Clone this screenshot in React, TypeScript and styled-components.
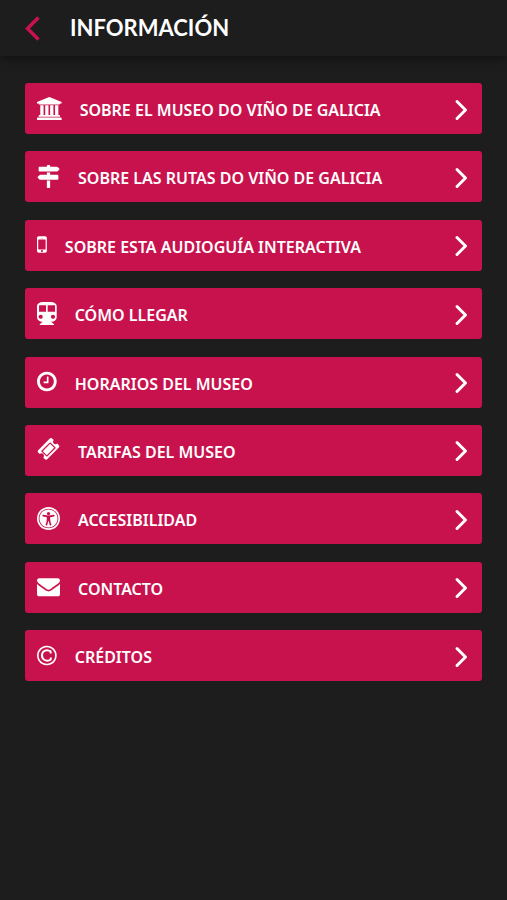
import React from 'react';
import styled, { createGlobalStyle } from 'styled-components';

const GlobalStyle = createGlobalStyle`
  *, *::before, *::after { box-sizing: border-box; }
  body {
    margin: 0;
    background: #1d1d1d;
    font-family: 'Noto Sans', 'Open Sans', sans-serif;
  }
`;

const Page = styled.div`
  min-height: 100vh;
  background: #1d1d1d;
  color: #fff;
`;

const Header = styled.header`
  display: flex;
  align-items: center;
  gap: 28px;
  height: 56px;
  padding: 0 24px;
  box-shadow: 0 2px 10px rgba(0, 0, 0, 0.5);
`;

const BackButton = styled.button`
  display: flex;
  padding: 0;
  border: 0;
  background: none;
  color: #c8124d;
  cursor: pointer;
`;

const Title = styled.h1`
  margin: 0;
  font-family: Optima, Lato, sans-serif;
  font-size: 22px;
  font-weight: 700;
  line-height: 28px;
`;

const Menu = styled.ul`
  display: grid;
  align-content: space-between;
  gap: 17px;
  min-height: 598px;
  margin: 27px 25px;
  padding: 0;
  list-style: none;
`;

const MenuLink = styled.a`
  display: flex;
  align-items: center;
  gap: 18px;
  min-height: 51px;
  padding: 0 14px 0 12px;
  border-radius: 3px;
  background: #c8124d;
  color: #fff;
  text-decoration: none;
`;

const Glyph = styled.svg`
  flex: none;
  height: 23px;
  margin-bottom: 1px;
  fill: currentColor;
`;

const Label = styled.span`
  flex: 1;
  padding-top: 3px;
  font-size: 16px;
  font-weight: 600;
  line-height: 24px;
`;

type Icon = { width: number; path: string };

const icons: Record<string, Icon> = {
  museum: {
    width: 1920,
    path: 'M960 1536l960 -384v-128h-128q0 -26 -20.5 -45t-48.5 -19h-1526q-28 0 -48.5 19t-20.5 45h-128v128zM256 896h256v-768h128v768h256v-768h128v768h256v-768h128v768h256v-768h59q28 0 48.5 -19t20.5 -45v-64h-1664v64q0 26 20.5 45t48.5 19h59v768zM1851 -64q28 0 48.5 -19t20.5 -45v-128h-1920v128q0 26 20.5 45t48.5 19h1782z',
  },
  signs: {
    width: 1792,
    path: 'M1745 1239q10 -10 10 -23t-10 -23l-141 -141q-28 -28 -68 -28h-1344q-26 0 -45 19t-19 45v256q0 26 19 45t45 19h576v64q0 26 19 45t45 19h128q26 0 45 -19t19 -45v-64h512q40 0 68 -28zM768 320h256v-512q0 -26 -19 -45t-45 -19h-128q-26 0 -45 19t-19 45v512zM1600 768q26 0 45 -19t19 -45v-256q0 -26 -19 -45t-45 -19h-1344q-40 0 -68 28l-141 141q-10 10 -10 23t10 23l141 141q28 28 68 28h512v192h256v-192h576z',
  },
  mobile: {
    width: 768,
    path: 'M464 128q0 33 -23.5 56.5t-56.5 23.5t-56.5 -23.5t-23.5 -56.5t23.5 -56.5t56.5 -23.5t56.5 23.5t23.5 56.5zM672 288v704q0 13 -9.5 22.5t-22.5 9.5h-512q-13 0 -22.5 -9.5t-9.5 -22.5v-704q0 -13 9.5 -22.5t22.5 -9.5h512q13 0 22.5 9.5t9.5 22.5zM480 1136q0 16 -16 16h-160q-16 0 -16 -16t16 -16h160q16 0 16 16zM768 1152v-1024q0 -52 -38 -90t-90 -38h-512q-52 0 -90 38t-38 90v1024q0 52 38 90t90 38h512q52 0 90 -38t38 -90z',
  },
  subway: {
    width: 1536,
    path: 'M1088 1536q185 0 316.5 -93.5t131.5 -226.5v-896q0 -130 -125.5 -222t-305.5 -97l213 -202q16 -15 8 -35t-30 -20h-1056q-22 0 -30 20t8 35l213 202q-180 5 -305.5 97t-125.5 222v896q0 133 131.5 226.5t316.5 93.5h640zM288 224q66 0 113 47t47 113t-47 113t-113 47t-113 -47t-47 -113t47 -113t113 -47zM704 768v512h-544v-512h544zM1248 224q66 0 113 47t47 113t-47 113t-113 47t-113 -47t-47 -113t47 -113t113 -47zM1408 768v512h-576v-512h576z',
  },
  clock: {
    width: 1536,
    path: 'M896 992v-448q0 -14 -9 -23t-23 -9h-320q-14 0 -23 9t-9 23v64q0 14 9 23t23 9h224v352q0 14 9 23t23 9h64q14 0 23 -9t9 -23zM1312 640q0 148 -73 273t-198 198t-273 73t-273 -73t-198 -198t-73 -273t73 -273t198 -198t273 -73t273 73t198 198t73 273zM1536 640q0 -209 -103 -385.5t-279.5 -279.5t-385.5 -103t-385.5 103t-279.5 279.5t-103 385.5t103 385.5t279.5 279.5t385.5 103t385.5 -103t279.5 -279.5t103 -385.5z',
  },
  ticket: {
    width: 1792,
    path: 'M1024 1084l316 -316l-572 -572l-316 316zM813 105l618 618q19 19 19 45t-19 45l-362 362q-18 18 -45 18t-45 -18l-618 -618q-19 -19 -19 -45t19 -45l362 -362q18 -18 45 -18t45 18zM1702 794l-907 -908q-37 -37 -90.5 -37t-90.5 37l-126 126q56 56 56 136t-56 136t-136 56t-136 -56l-125 126q-37 37 -37 90.5t37 90.5l907 906q37 37 90.5 37t90.5 -37l125 -125q-56 -56 -56 -136t56 -136t136 -56t136 56l126 -125q37 -37 37 -90.5t-37 -90.5z',
  },
  access: {
    width: 1792,
    path: 'M1374 879q-6 26 -28.5 39.5t-48.5 7.5q-261 -62 -401 -62t-401 62q-26 6 -48.5 -7.5t-28.5 -39.5t7.5 -48.5t39.5 -28.5q194 -46 303 -58q-2 -158 -15.5 -269t-26.5 -155.5t-41 -115.5l-9 -21q-10 -25 1 -49t36 -34q9 -4 23 -4q44 0 60 41l8 20q54 139 71 259h42q17 -120 71 -259l8 -20q16 -41 60 -41q14 0 23 4q25 10 36 34t1 49l-9 21q-28 71 -41 115.5t-26.5 155.5t-15.5 269q109 12 303 58q26 6 39.5 28.5t7.5 48.5zM1024 1024q0 53 -37.5 90.5t-90.5 37.5t-90.5 -37.5t-37.5 -90.5t37.5 -90.5t90.5 -37.5t90.5 37.5t37.5 90.5zM1600 640q0 -143 -55.5 -273.5t-150 -225t-225 -150t-273.5 -55.5t-273.5 55.5t-225 150t-150 225t-55.5 273.5t55.5 273.5t150 225t225 150t273.5 55.5t273.5 -55.5t225 -150t150 -225t55.5 -273.5zM896 1408q-156 0 -298 -61t-245 -164t-164 -245t-61 -298t61 -298t164 -245t245 -164t298 -61t298 61t245 164t164 245t61 298t-61 298t-164 245t-245 164t-298 61zM1792 640q0 -182 -71 -348t-191 -286t-286 -191t-348 -71t-348 71t-286 191t-191 286t-71 348t71 348t191 286t286 191t348 71t348 -71t286 -191t191 -286t71 -348z',
  },
  envelope: {
    width: 1792,
    path: 'M1792 826v-794q0 -66 -47 -113t-113 -47h-1472q-66 0 -113 47t-47 113v794q44 -49 101 -87q362 -246 497 -345q57 -42 92.5 -65.5t94.5 -48t110 -24.5h1h1q51 0 110 24.5t94.5 48t92.5 65.5q170 123 498 345q57 39 100 87zM1792 1120q0 -79 -49 -151t-122 -123q-376 -261 -468 -325q-10 -7 -42.5 -31t-54 -38.5t-52 -32.5t-57.5 -27t-50 -9h-1h-1q-23 0 -50 9t-57.5 27t-52 32.5t-54 38.5t-42.5 31q-91 64 -262 182.5t-205 142.5q-62 42 -117 115.5t-55 136.5q0 78 41.5 130t118.5 52h1472q65 0 112.5 -47t47.5 -113z',
  },
  copyright: {
    width: 1536,
    path: 'M1150 462v-109q0 -50 -36.5 -89t-94 -60.5t-118 -32.5t-117.5 -11q-205 0 -342.5 139t-137.5 346q0 203 136 339t339 136q34 0 75.5 -4.5t93 -18t92.5 -34t69 -56.5t28 -81v-109q0 -16 -16 -16h-118q-16 0 -16 16v70q0 43 -65.5 67.5t-137.5 24.5q-140 0 -228.5 -91.5t-88.5 -237.5q0 -151 91.5 -249.5t233.5 -98.5q68 0 138 24t70 66v70q0 7 4.5 11.5t10.5 4.5h119q6 0 11 -4.5t5 -11.5zM768 1280q-130 0 -248.5 -51t-204 -136.5t-136.5 -204t-51 -248.5t51 -248.5t136.5 -204t204 -136.5t248.5 -51t248.5 51t204 136.5t136.5 204t51 248.5t-51 248.5t-136.5 204t-204 136.5t-248.5 51zM1536 640q0 -209 -103 -385.5t-279.5 -279.5t-385.5 -103t-385.5 103t-279.5 279.5t-103 385.5t103 385.5t279.5 279.5t385.5 103t385.5 -103t279.5 -279.5t103 -385.5z',
  },
};

const items = [
  { id: 'museo', icon: 'museum', label: 'SOBRE EL MUSEO DO VIÑO DE GALICIA' },
  { id: 'rutas', icon: 'signs', label: 'SOBRE LAS RUTAS DO VIÑO DE GALICIA' },
  { id: 'audioguia', icon: 'mobile', label: 'SOBRE ESTA AUDIOGUÍA INTERACTIVA' },
  { id: 'llegar', icon: 'subway', label: 'CÓMO LLEGAR' },
  { id: 'horarios', icon: 'clock', label: 'HORARIOS DEL MUSEO' },
  { id: 'tarifas', icon: 'ticket', label: 'TARIFAS DEL MUSEO' },
  { id: 'accesibilidad', icon: 'access', label: 'ACCESIBILIDAD' },
  { id: 'contacto', icon: 'envelope', label: 'CONTACTO' },
  { id: 'creditos', icon: 'copyright', label: 'CRÉDITOS' },
];

// The glyph outlines use font units: y points up and the ascent is 1536.
function MenuIcon({ name }: { name: string }) {
  const { width, path } = icons[name];
  return (
    <Glyph viewBox={`0 0 ${width} 1792`} aria-hidden="true">
      <path transform="translate(0 1536) scale(1 -1)" d={path} />
    </Glyph>
  );
}

function Chevron() {
  return (
    <svg width="15" height="24" viewBox="0 0 15 24" fill="none" stroke="currentColor" strokeWidth="3" strokeLinecap="round" strokeLinejoin="round" aria-hidden="true">
      <path d="M4 4.500L12.500 13L4 21.500" />
    </svg>
  );
}

export default function App() {
  return (
    <>
      <GlobalStyle />
      <Page>
        <Header>
          <BackButton type="button" aria-label="Volver">
            <svg width="18" height="26" viewBox="0 0 18 26" fill="none" stroke="currentColor" strokeWidth="3.500" aria-hidden="true">
              <path d="M14.500 2.500L3.500 13.500L14.500 24.500" />
            </svg>
          </BackButton>
          <Title>INFORMACIÓN</Title>
        </Header>
        <nav aria-label="Información">
          <Menu>
            {items.map((item) => (
              <li key={item.id}>
                <MenuLink href={`#${item.id}`}>
                  <MenuIcon name={item.icon} />
                  <Label>{item.label}</Label>
                  <Chevron />
                </MenuLink>
              </li>
            ))}
          </Menu>
        </nav>
      </Page>
    </>
  );
}
